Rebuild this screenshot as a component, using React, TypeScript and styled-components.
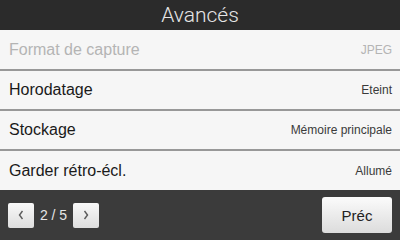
import React from "react";
import styled, { createGlobalStyle } from "styled-components";

const Global = createGlobalStyle`
  html, body { margin: 0; padding: 0; }
  body { width: 400px; height: 240px; overflow: hidden; font-family: "Liberation Sans", Arial, sans-serif; }
`;

const Screen = styled.div`
  width: 400px;
  height: 240px;
  display: flex;
  flex-direction: column;
  background: #f5f5f5;
`;

const Header = styled.div`
  height: 30px;
  flex: none;
  background: #2b2b2b;
  color: #e6e6e6;
  font-family: Roboto, "Liberation Sans", sans-serif;
  font-weight: 300;
  font-size: 21px;
  display: flex;
  align-items: center;
  justify-content: center;
`;

const List = styled.div`
  display: flex;
  flex-direction: column;
`;

const Row = styled.div<{ $first?: boolean; $last?: boolean }>`
  height: ${(p) => (p.$first ? "41px" : p.$last ? "39px" : "40px")};
  box-sizing: border-box;
  display: flex;
  align-items: center;
  justify-content: space-between;
  padding: 0 8px 0 9px;
  background: #f6f6f6;
  border-bottom: ${(p) => (p.$last ? "none" : "2px solid #989898")};
`;

const Label = styled.span<{ $disabled?: boolean }>`
  font-size: 16px;
  color: ${(p) => (p.$disabled ? "#b4b4b4" : "#1a1a1a")};
`;

const Value = styled.span<{ $disabled?: boolean }>`
  font-size: 12px;
  color: ${(p) => (p.$disabled ? "#b4b4b4" : "#3a3a3a")};
`;

const Footer = styled.div`
  flex: 1;
  background: #3b3b3b;
  display: flex;
  align-items: center;
  justify-content: space-between;
  padding: 0 8px;
`;

const Pager = styled.div`
  display: flex;
  align-items: center;
`;

const ArrowButton = styled.button`
  width: 26px;
  height: 25px;
  padding: 0;
  border: none;
  border-radius: 2px;
  background: linear-gradient(#f8f8f8, #dedede);
  display: flex;
  align-items: center;
  justify-content: center;
`;

const PageText = styled.span`
  width: 39px;
  text-align: center;
  color: #e6e6e6;
  font-size: 14px;
`;

const PrevButton = styled.button`
  width: 70px;
  height: 36px;
  border: none;
  border-radius: 3px;
  background: linear-gradient(#fbfbfb, #dcdcdc);
  font-family: "Liberation Sans", Arial, sans-serif;
  font-size: 15px;
  color: #222;
  padding: 0;
`;

const Chevron = ({ dir }: { dir: "left" | "right" }) => (
  <svg width="8" height="10" viewBox="0 0 8 10">
    <path
      d={dir === "left" ? "M5.5 1 L2.5 5 L5.5 9" : "M2.5 1 L5.5 5 L2.5 9"}
      fill="none"
      stroke="#5a5a5a"
      strokeWidth="1.4"
    />
  </svg>
);

const rows = [
  { label: "Format de capture", value: "JPEG", disabled: true },
  { label: "Horodatage", value: "Eteint" },
  { label: "Stockage", value: "Mémoire principale" },
  { label: "Garder rétro-écl.", value: "Allumé" },
];

export default function App() {
  return (
    <>
      <Global />
      <Screen>
        <Header>Avancés</Header>
        <List>
          {rows.map((r, i) => (
            <Row key={r.label} $first={i === 0} $last={i === rows.length - 1}>
              <Label $disabled={r.disabled}>{r.label}</Label>
              <Value $disabled={r.disabled}>{r.value}</Value>
            </Row>
          ))}
        </List>
        <Footer>
          <Pager>
            <ArrowButton><Chevron dir="left" /></ArrowButton>
            <PageText>2 / 5</PageText>
            <ArrowButton><Chevron dir="right" /></ArrowButton>
          </Pager>
          <PrevButton>Préc</PrevButton>
        </Footer>
      </Screen>
    </>
  );
}
